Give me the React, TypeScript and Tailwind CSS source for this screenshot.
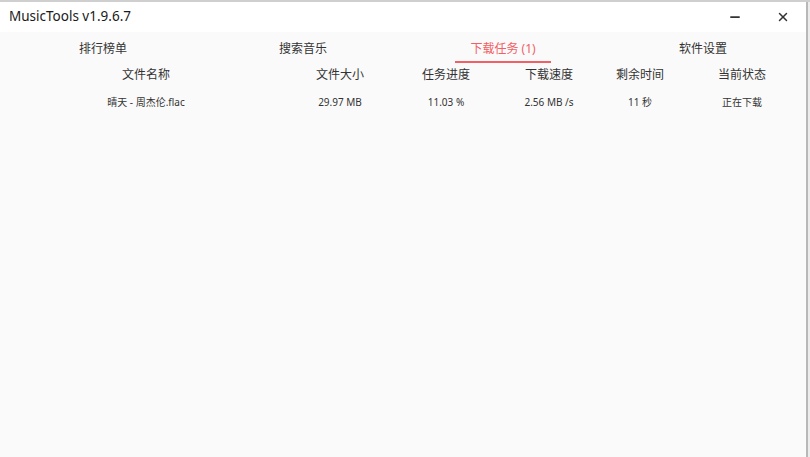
import { Minus, X } from "lucide-react";

// each column 80px wide, left margins put the centers where the reference has them
const columns = [
  { title: "文件名称", ml: "ml-[106px]" },
  { title: "文件大小", ml: "ml-[114px]" },
  { title: "任务进度", ml: "ml-[26px]" },
  { title: "下载速度", ml: "ml-[23px]" },
  { title: "剩余时间", ml: "ml-[11px]" },
  { title: "当前状态", ml: "ml-[22px]" },
];

const rows = [["晴天 - 周杰伦.flac", "29.97 MB", "11.03 %", "2.56 MB /s", "11 秒", "正在下载"]];

const tabs = ["排行榜单", "搜索音乐", "下载任务 (1)", "软件设置"];

export default function App() {
  return (
    <div
      className="flex h-[457px] w-[810px] flex-col overflow-hidden border-t-2 border-[#cfcfcf] bg-white text-[#333]"
      style={{ fontFamily: '"Noto Sans", "Noto Sans CJK SC", sans-serif' }}
    >
      <div className="flex flex-1 flex-row">
        <div className="flex flex-1 flex-col">
          {/* title bar */}
          <div className="flex h-[30px] items-center bg-white pl-[9px] pr-[16px]">
            <span className="text-[13.5px] leading-none text-[#1a1a1a]">MusicTools v1.9.6.7</span>
            <div className="ml-auto flex items-center gap-[34px]">
              <Minus className="h-[14px] w-[14px] text-[#333]" strokeWidth={3} />
              <X className="h-[14px] w-[14px] text-[#333]" strokeWidth={2.5} />
            </div>
          </div>

          <div className="flex flex-1 flex-col bg-[#fafafa]">
            {/* tabs */}
            <div className="flex pl-[3px] pt-[8px]">
              {tabs.map((t, i) => (
                <div key={t} className="flex w-[200px] flex-col items-center">
                  <span className={"text-[12px] leading-[18px] " + (i === 2 ? "text-[#f25f65]" : "text-[#333]")}>{t}</span>
                  <div className={"mt-[3px] h-[2px] w-[96px] " + (i === 2 ? "bg-[#f25f65]" : "bg-transparent")} />
                </div>
              ))}
            </div>

            {/* table header */}
            <div className="flex pt-[3px]">
              {columns.map((c) => (
                <div key={c.title} className={c.ml + " w-[80px] whitespace-nowrap text-center text-[12px] leading-[18px]"}>
                  {c.title}
                </div>
              ))}
            </div>

            {/* rows */}
            {rows.map((r) => (
              <div key={r[0]} className="flex pt-[10px]">
                {r.map((cell, i) => (
                  <div key={i} className={columns[i].ml + " w-[80px] whitespace-nowrap text-center text-[10px] leading-[16px]"}>
                    {cell}
                  </div>
                ))}
              </div>
            ))}
          </div>
        </div>
        <div className="w-[2px] bg-[#b8b8b8]" />
        <div className="w-[2px] bg-[#ececec]" />
      </div>
    </div>
  );
}
